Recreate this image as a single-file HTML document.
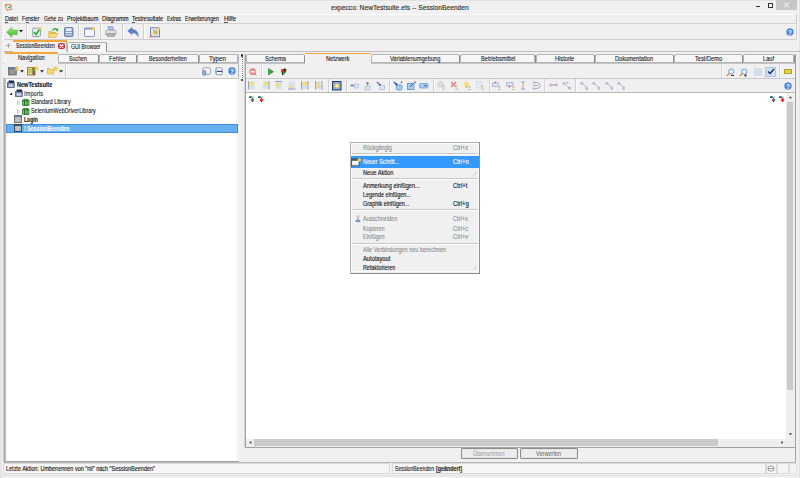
<!DOCTYPE html>
<html><head><meta charset="utf-8"><style>
html,body{margin:0;padding:0;width:800px;height:478px;overflow:hidden;background:#f0f0f0;}
body{position:relative;font-family:"Liberation Sans",sans-serif;}
div,span,svg{position:absolute;}
span{white-space:nowrap;transform-origin:0 0;-webkit-text-stroke:0.12px currentColor;}
</style></head><body>
<div style="left:0px;top:0px;width:800px;height:478px;background:#f0f0f0;"></div>
<div style="left:0px;top:0px;width:1px;height:478px;background:#e4e4e4;"></div>
<div style="left:1px;top:0px;width:1px;height:478px;background:#e8e8e8;"></div>
<div style="left:799px;top:0px;width:1px;height:478px;background:#e4e4e4;"></div>
<div style="left:0px;top:475px;width:800px;height:1px;background:#e2e2e2;"></div>
<div style="left:0px;top:0px;width:800px;height:1px;background:#e2e2e2;"></div>
<span style="left:331px;top:3.78px;font-size:7.2px;line-height:7.2px;color:#2a2a2a;transform:scaleX(0.9294);">expecco: NewTestsuite.ets -- SessionBeenden</span>
<svg style="left:4px;top:3px" width="9" height="8"><path d="M1 2.5 L6 1 L8 6 L3 7.5 Z" fill="#dde6f0" stroke="#d09050" stroke-width="1"/><path d="M1.5 1.8 L3 1.2" stroke="#d04040" stroke-width="1"/><path d="M4 4 L5 5 L7.5 2" stroke="#33aa33" stroke-width="1" fill="none"/></svg>
<div style="left:755.8px;top:5.6px;width:4.0px;height:1.0px;background:#333;"></div>
<div style="left:767.5px;top:3px;width:5.2999999999999545px;height:4.6px;box-sizing:border-box;border:0.8px solid #333;border-top-width:1.6px;"></div>
<div style="left:776px;top:0px;width:21px;height:10px;background:#c7c7c7;"></div>
<svg style="left:783px;top:2px" width="7" height="6"><path d="M1 0.5 L6 5.5 M6 0.5 L1 5.5" stroke="#fff" stroke-width="1" fill="none"/></svg>
<div style="left:4px;top:14px;width:792px;height:1px;background:#fafafa;"></div>
<div style="left:4px;top:23px;width:792px;height:1px;background:#d4d4d4;"></div>
<span style="left:4.5px;top:16.28px;font-size:6.6px;line-height:6.6px;color:#111;transform:scaleX(0.8372);">Datei</span>
<span style="left:21.6px;top:16.28px;font-size:6.6px;line-height:6.6px;color:#111;transform:scaleX(0.7776);">Fenster</span>
<span style="left:43.5px;top:16.28px;font-size:6.6px;line-height:6.6px;color:#111;transform:scaleX(0.7615);">Gehe zu</span>
<span style="left:66.7px;top:16.28px;font-size:6.6px;line-height:6.6px;color:#111;transform:scaleX(0.8448);">Projektbaum</span>
<span style="left:102px;top:16.28px;font-size:6.6px;line-height:6.6px;color:#111;transform:scaleX(0.8706);">Diagramm</span>
<span style="left:132px;top:16.28px;font-size:6.6px;line-height:6.6px;color:#111;transform:scaleX(0.8285);">Testresultate</span>
<span style="left:167px;top:16.28px;font-size:6.6px;line-height:6.6px;color:#111;transform:scaleX(0.7485);">Extras</span>
<span style="left:185px;top:16.28px;font-size:6.6px;line-height:6.6px;color:#111;transform:scaleX(0.7989);">Erweiterungen</span>
<span style="left:223.7px;top:16.28px;font-size:6.6px;line-height:6.6px;color:#111;transform:scaleX(0.9088);">Hilfe</span>
<div style="left:4.8px;top:22px;width:3.2px;height:0.6999999999999993px;background:#555;"></div>
<div style="left:26px;top:22px;width:3px;height:0.6999999999999993px;background:#555;"></div>
<div style="left:132.3px;top:22px;width:3.1999999999999886px;height:0.6999999999999993px;background:#555;"></div>
<div style="left:224px;top:22px;width:3.5px;height:0.6999999999999993px;background:#555;"></div>
<div style="left:4px;top:39px;width:792px;height:1px;background:#cdcdcd;"></div>
<div style="left:26px;top:24px;width:1px;height:15px;background:#d0d0d0;"></div>
<div style="left:27px;top:24px;width:1px;height:15px;background:#fafafa;"></div>
<div style="left:78px;top:24px;width:1px;height:15px;background:#d0d0d0;"></div>
<div style="left:79px;top:24px;width:1px;height:15px;background:#fafafa;"></div>
<div style="left:100px;top:24px;width:1px;height:15px;background:#d0d0d0;"></div>
<div style="left:101px;top:24px;width:1px;height:15px;background:#fafafa;"></div>
<div style="left:122px;top:24px;width:1px;height:15px;background:#d0d0d0;"></div>
<div style="left:123px;top:24px;width:1px;height:15px;background:#fafafa;"></div>
<div style="left:143px;top:24px;width:1px;height:15px;background:#d0d0d0;"></div>
<div style="left:144px;top:24px;width:1px;height:15px;background:#fafafa;"></div>
<div style="left:796px;top:14px;width:1px;height:26px;background:#d0d0d0;"></div>
<div style="left:3px;top:14px;width:1px;height:26px;background:#fafafa;"></div>
<svg style="left:6px;top:26.5px" width="12" height="11"><defs><linearGradient id="ga" x1="0" y1="0" x2="0" y2="1"><stop offset="0" stop-color="#9aee7a"/><stop offset="1" stop-color="#3cb82c"/></linearGradient></defs><path d="M0.5 5.2 L5.8 0.3 L5.8 3 L11.2 3 L11.2 7.6 L5.8 7.6 L5.8 10.3 Z" fill="url(#ga)" stroke="#48a838" stroke-width="0.5"/></svg>
<svg style="left:19px;top:30px" width="4" height="3"><path d="M0 0 L4 0 L2 2.5 Z" fill="#222"/></svg>
<svg style="left:32px;top:27px" width="10" height="10"><rect x="0.6" y="1.2" width="8" height="8.3" rx="1" fill="#e4ecf4" stroke="#8a98a8" stroke-width="0.9"/><path d="M2 5 L4 7.5 L7.8 2" stroke="#22b422" stroke-width="1.6" fill="none"/><circle cx="8.3" cy="1.6" r="1.5" fill="#f6d040"/></svg>
<svg style="left:48px;top:26.5px" width="11" height="11"><path d="M0.5 4 L3.5 4 L4.5 5 L8 5 L8 10.3 L0.5 10.3 Z" fill="#e8c040"/><path d="M1.5 6.5 L10 6.5 L8 10.3 L0.5 10.3 Z" fill="#f8e080" stroke="#d0a030" stroke-width="0.5"/><path d="M4.5 3.5 Q6.5 0.5 9.5 2.5" stroke="#48b048" stroke-width="1.6" fill="none"/><path d="M10.5 1.5 L9.8 4.8 L7.5 3 Z" fill="#48b048"/></svg>
<svg style="left:64px;top:27px" width="10" height="10"><rect x="0.5" y="0.5" width="8.5" height="9" rx="1.2" fill="#8da0cc" stroke="#5a6ca0" stroke-width="0.8"/><rect x="2" y="1.2" width="5.5" height="2.8" fill="#e8eef8"/><rect x="1.5" y="5" width="6.5" height="0.9" fill="#e8eef8"/><rect x="1.5" y="7" width="6.5" height="1.5" fill="#b8c6e4"/></svg>
<svg style="left:84px;top:27px" width="12" height="10"><rect x="0.5" y="1" width="10" height="8.5" rx="0.8" fill="#f4f6fa" stroke="#7a8cb8" stroke-width="0.9"/><rect x="0.5" y="1" width="10" height="1.6" fill="#8a9cc8"/><circle cx="9.8" cy="1.8" r="1.6" fill="#f8d040"/></svg>
<svg style="left:105px;top:26px" width="12" height="11"><path d="M2.5 0.5 L7.5 0.5 L9 4 L4 4 Z" fill="#a8c0e8" stroke="#7a8ab8" stroke-width="0.5"/><path d="M0.5 6 Q0.5 4 2.5 4 L9 4 Q11 4 11 6 L11 8.5 L0.5 8.5 Z" fill="#d8d8d8" stroke="#909090" stroke-width="0.6"/><rect x="2" y="7.5" width="7.5" height="3" fill="#b0b0b0" stroke="#888" stroke-width="0.5"/><path d="M1 6 H10" stroke="#f4f4f4" stroke-width="0.7"/></svg>
<svg style="left:127px;top:27px" width="12" height="10"><path d="M0.8 4 L5 0.5 L5 2.6 Q11.2 2.6 11.2 9.5 Q9.5 5.6 5 5.6 L5 7.6 Z" fill="#5a84cc" stroke="#3a5aa8" stroke-width="0.5"/></svg>
<svg style="left:148.5px;top:26.5px" width="12" height="11"><rect x="1.5" y="0.8" width="9" height="9" fill="#dfe8f5" stroke="#6a7aa8" stroke-width="0.9"/><circle cx="6.5" cy="5" r="2.6" fill="#f0c838"/><path d="M4 3 L8.5 7" stroke="#6aa0e0" stroke-width="0.8"/><path d="M0.3 10.5 L3 8.2" stroke="#f08a30" stroke-width="1.3"/><circle cx="10" cy="1.2" r="1.1" fill="#f8d040"/></svg>
<svg style="left:786px;top:27.5px" width="8" height="8"><circle cx="4" cy="4" r="3.7" fill="#4a86e0"/><text x="4" y="6.6" font-size="6.5" font-weight="bold" fill="#fff" text-anchor="middle" font-family="Liberation Sans">?</text></svg>
<div style="left:4px;top:51px;width:796px;height:1px;background:#bdbdbd;"></div>
<svg style="left:5.5px;top:43px" width="5" height="5"><path d="M2.5 0.3 L2.5 4.7 M0.3 2.5 L4.7 2.5" stroke="#a8a8a8" stroke-width="1.1"/></svg>
<div style="left:13px;top:40px;width:54px;height:12px;background:#f0f0f0;"></div>
<div style="left:13px;top:40px;width:54px;height:2px;background:#f5a53a;"></div>
<div style="left:13px;top:42px;width:1px;height:9px;background:#fafafa;"></div>
<div style="left:66px;top:42px;width:1px;height:9px;background:#b8b8b8;"></div>
<span style="left:16.3px;top:42.68px;font-size:6.6px;line-height:6.6px;color:#222;transform:scaleX(0.7814);">SessionBeenden</span>
<div style="left:58px;top:42.8px;width:7.200000000000003px;height:6.200000000000003px;background:#e24848;box-sizing:border-box;border:0.8px solid #c03434;border-radius:1.5px;"></div>
<svg style="left:59px;top:44px" width="5" height="4"><path d="M0.8 0.5 L4.2 3.5 M4.2 0.5 L0.8 3.5" stroke="#fff" stroke-width="1.1"/></svg>
<div style="left:67px;top:42px;width:40px;height:10px;background:#f7f7f7;box-sizing:border-box;border:1px solid #b0b0b0;border-bottom:none;border-radius:2px 2px 0 0;"></div>
<div style="left:106px;top:43px;width:1px;height:8px;background:#8e8e8e;"></div>
<span style="left:71.2px;top:43.78px;font-size:6.6px;line-height:6.6px;color:#222;transform:scaleX(0.7836);">GUI Browser</span>
<div style="left:4px;top:63px;width:235px;height:1px;background:#c4c4c4;"></div>
<div style="left:4.5px;top:52.5px;width:53.5px;height:11.5px;background:#f0f0f0;"></div>
<div style="left:4.5px;top:52.0px;width:53.5px;height:1.7999999999999972px;background:#f5a53a;"></div>
<div style="left:4.5px;top:53.5px;width:1.0px;height:9.5px;background:#fafafa;"></div>
<div style="left:58px;top:53.5px;width:40.5px;height:9.5px;background:#f6f6f6;box-sizing:border-box;border:1px solid #b4b4b4;border-radius:2px 2px 0 0;"></div>
<div style="left:97.5px;top:54.5px;width:1.0px;height:8.5px;background:#8c8c8c;"></div>
<div style="left:98.5px;top:53.5px;width:38.099999999999994px;height:9.5px;background:#f6f6f6;box-sizing:border-box;border:1px solid #b4b4b4;border-radius:2px 2px 0 0;"></div>
<div style="left:135.6px;top:54.5px;width:1.0px;height:8.5px;background:#8c8c8c;"></div>
<div style="left:136.6px;top:53.5px;width:62.0px;height:9.5px;background:#f6f6f6;box-sizing:border-box;border:1px solid #b4b4b4;border-radius:2px 2px 0 0;"></div>
<div style="left:197.6px;top:54.5px;width:1.0px;height:8.5px;background:#8c8c8c;"></div>
<div style="left:198.6px;top:53.5px;width:39.900000000000006px;height:9.5px;background:#f6f6f6;box-sizing:border-box;border:1px solid #b4b4b4;border-radius:2px 2px 0 0;"></div>
<div style="left:237.5px;top:54.5px;width:1.0px;height:8.5px;background:#8c8c8c;"></div>
<span style="left:17.9px;top:55.08px;font-size:6.6px;line-height:6.6px;color:#222;transform:scaleX(0.8561);">Navigation</span>
<span style="left:68.75px;top:55.78px;font-size:6.6px;line-height:6.6px;color:#222;transform:scaleX(0.8041);">Suchen</span>
<span style="left:108.5px;top:55.78px;font-size:6.6px;line-height:6.6px;color:#222;transform:scaleX(0.9087);">Fehler</span>
<span style="left:148.8px;top:55.78px;font-size:6.6px;line-height:6.6px;color:#222;transform:scaleX(0.8154);">Besonderheiten</span>
<span style="left:209px;top:55.78px;font-size:6.6px;line-height:6.6px;color:#222;transform:scaleX(0.9455);">Typen</span>
<div style="left:4px;top:78px;width:235px;height:1px;background:#c8c8c8;"></div>
<div style="left:65px;top:64px;width:1px;height:14px;background:#d0d0d0;"></div>
<div style="left:66px;top:64px;width:1px;height:14px;background:#fafafa;"></div>
<div style="left:238px;top:54px;width:1px;height:24px;background:#b8b8b8;"></div>
<svg style="left:8px;top:66px" width="12" height="10"><rect x="0.3" y="1.5" width="8" height="7.5" fill="#8a8a8a" stroke="#5a5a5a" stroke-width="0.6"/><rect x="0.3" y="1.5" width="8" height="1.5" fill="#5a78b0"/><path d="M2 4.5 L6.5 7.5 M6.5 4.5 L2 7.5" stroke="#b0b0b0" stroke-width="0.8"/><path d="M8.80 0.20 L9.43 1.73 L11.08 1.86 L9.83 2.93 L10.21 4.54 L8.80 3.68 L7.39 4.54 L7.77 2.93 L6.52 1.86 L8.17 1.73 Z" fill="#f8d848" stroke="#e0a820" stroke-width="0.4"/></svg>
<svg style="left:19.8px;top:70px" width="4" height="3"><path d="M0 0.2 L4 0.2 L2 2.6 Z" fill="#222"/></svg>
<svg style="left:27px;top:66px" width="12" height="10"><rect x="0.5" y="1.5" width="7.5" height="7.5" fill="#e8e070" stroke="#6a6a40" stroke-width="0.7"/><path d="M1 3.8 H5.5 M1 6 H5.5" stroke="#7a7a40" stroke-width="0.6"/><rect x="5.5" y="2" width="2.5" height="6.8" fill="#604030"/><circle cx="6.8" cy="4" r="0.9" fill="#40c040"/><circle cx="6.8" cy="5.8" r="0.9" fill="#40c040"/><circle cx="6.8" cy="7.6" r="0.9" fill="#e05030"/><path d="M9.00 0.20 L9.63 1.73 L11.28 1.86 L10.03 2.93 L10.41 4.54 L9.00 3.68 L7.59 4.54 L7.97 2.93 L6.72 1.86 L8.37 1.73 Z" fill="#f8d848" stroke="#e0a820" stroke-width="0.4"/></svg>
<svg style="left:39.5px;top:70px" width="4" height="3"><path d="M0 0.2 L4 0.2 L2 2.6 Z" fill="#222"/></svg>
<svg style="left:46.5px;top:66px" width="12" height="10"><path d="M0.5 2.5 L3 2.5 L4 3.5 L7 3.5 L7 8 L0.5 8 Z" fill="#f6d868" stroke="#d0a840" stroke-width="0.6"/><path d="M8.60 0.20 L9.23 1.73 L10.88 1.86 L9.63 2.93 L10.01 4.54 L8.60 3.68 L7.19 4.54 L7.57 2.93 L6.32 1.86 L7.97 1.73 Z" fill="#f8d848" stroke="#e0a820" stroke-width="0.4"/></svg>
<svg style="left:59px;top:70px" width="4" height="3"><path d="M0 0.2 L4 0.2 L2 2.6 Z" fill="#222"/></svg>
<svg style="left:202px;top:66.5px" width="9" height="9"><rect x="1" y="0.8" width="7.3" height="6.5" rx="1.2" fill="#fbfbfb" stroke="#8a90b0" stroke-width="0.9"/><rect x="0.6" y="3.6" width="3.4" height="4.6" rx="1" fill="#88b0e0" stroke="#6a80b0" stroke-width="0.6"/></svg>
<svg style="left:215px;top:66.5px" width="8" height="9"><rect x="0.8" y="0.8" width="6.4" height="7" rx="1.2" fill="#fbfbfb" stroke="#8a90b0" stroke-width="0.9"/><rect x="0.8" y="3.8" width="6.4" height="1.2" fill="#3a4880"/><rect x="0.8" y="1.5" width="1.2" height="5.5" fill="#8ac0ec"/></svg>
<svg style="left:228px;top:67px" width="8" height="8"><circle cx="4" cy="4" r="3.7" fill="#4a86e0"/><text x="4" y="6.6" font-size="6.5" font-weight="bold" fill="#fff" text-anchor="middle" font-family="Liberation Sans">?</text></svg>
<div style="left:5px;top:79px;width:233px;height:382px;background:#ffffff;"></div>
<div style="left:236px;top:79px;width:2px;height:382px;background:#f6f6f6;"></div>
<div style="left:3px;top:78px;width:1px;height:384px;background:#c4c4c4;"></div>
<div style="left:4px;top:78px;width:1px;height:384px;background:#adadad;"></div>
<div style="left:5px;top:78px;width:1px;height:384px;background:#c4c4c4;"></div>
<div style="left:6px;top:79px;width:1px;height:382px;background:#f0f0f0;"></div>
<div style="left:4px;top:461px;width:235px;height:1px;background:#a8a8a8;"></div>
<div style="left:241px;top:54px;width:2px;height:27px;background:#f8f8f8;"></div>
<div style="left:241.5px;top:57px;width:1.0px;height:1px;background:#7a7a7a;"></div>
<div style="left:241.5px;top:59px;width:1.0px;height:1px;background:#7a7a7a;"></div>
<div style="left:241.5px;top:61px;width:1.0px;height:1px;background:#7a7a7a;"></div>
<div style="left:241.5px;top:63px;width:1.0px;height:1px;background:#7a7a7a;"></div>
<div style="left:241.5px;top:65px;width:1.0px;height:1px;background:#7a7a7a;"></div>
<div style="left:241.5px;top:67px;width:1.0px;height:1px;background:#7a7a7a;"></div>
<div style="left:241.5px;top:69px;width:1.0px;height:1px;background:#7a7a7a;"></div>
<div style="left:241.5px;top:71px;width:1.0px;height:1px;background:#7a7a7a;"></div>
<div style="left:241.5px;top:73px;width:1.0px;height:1px;background:#7a7a7a;"></div>
<div style="left:241.5px;top:75px;width:1.0px;height:1px;background:#7a7a7a;"></div>
<div style="left:241.5px;top:77px;width:1.0px;height:1px;background:#7a7a7a;"></div>
<div style="left:241px;top:54px;width:1.8000000000000114px;height:2.5px;background:#222;border-radius:1px;"></div>
<div style="left:241px;top:78.5px;width:1.8000000000000114px;height:2.5px;background:#222;border-radius:1px;"></div>
<div style="left:245px;top:63px;width:550px;height:1px;background:#c4c4c4;"></div>
<div style="left:246.3px;top:54px;width:58.69999999999999px;height:9px;background:#f6f6f6;box-sizing:border-box;border:1px solid #b4b4b4;border-radius:2px 2px 0 0;"></div>
<div style="left:304px;top:55px;width:1px;height:8px;background:#8c8c8c;"></div>
<div style="left:305px;top:53px;width:65.60000000000002px;height:11px;background:#f0f0f0;"></div>
<div style="left:305px;top:52.5px;width:65.60000000000002px;height:1.7999999999999972px;background:#f5a53a;"></div>
<div style="left:305px;top:54px;width:1px;height:9px;background:#fafafa;"></div>
<div style="left:370.6px;top:54px;width:89.69999999999999px;height:9px;background:#f6f6f6;box-sizing:border-box;border:1px solid #b4b4b4;border-radius:2px 2px 0 0;"></div>
<div style="left:459.3px;top:55px;width:1.0px;height:8px;background:#8c8c8c;"></div>
<div style="left:460.3px;top:54px;width:75.19999999999999px;height:9px;background:#f6f6f6;box-sizing:border-box;border:1px solid #b4b4b4;border-radius:2px 2px 0 0;"></div>
<div style="left:534.5px;top:55px;width:1.0px;height:8px;background:#8c8c8c;"></div>
<div style="left:535.5px;top:54px;width:59.0px;height:9px;background:#f6f6f6;box-sizing:border-box;border:1px solid #b4b4b4;border-radius:2px 2px 0 0;"></div>
<div style="left:593.5px;top:55px;width:1.0px;height:8px;background:#8c8c8c;"></div>
<div style="left:594.5px;top:54px;width:79.70000000000005px;height:9px;background:#f6f6f6;box-sizing:border-box;border:1px solid #b4b4b4;border-radius:2px 2px 0 0;"></div>
<div style="left:673.2px;top:55px;width:1.0px;height:8px;background:#8c8c8c;"></div>
<div style="left:674.2px;top:54px;width:68.5px;height:9px;background:#f6f6f6;box-sizing:border-box;border:1px solid #b4b4b4;border-radius:2px 2px 0 0;"></div>
<div style="left:741.7px;top:55px;width:1.0px;height:8px;background:#8c8c8c;"></div>
<div style="left:742.7px;top:54px;width:51.799999999999955px;height:9px;background:#f6f6f6;box-sizing:border-box;border:1px solid #b4b4b4;border-radius:2px 2px 0 0;"></div>
<div style="left:793.5px;top:55px;width:1.0px;height:8px;background:#8c8c8c;"></div>
<span style="left:265.2385309375px;top:55.98px;font-size:6.6px;line-height:6.6px;color:#222;transform:scaleX(0.8600);">Schema</span>
<span style="left:325.97241328125px;top:55.98px;font-size:6.6px;line-height:6.6px;color:#222;transform:scaleX(0.8600);">Netzwerk</span>
<span style="left:390.25609843750004px;top:55.98px;font-size:6.6px;line-height:6.6px;color:#222;transform:scaleX(0.8600);">Variablenumgebung</span>
<span style="left:480.70792812499997px;top:55.98px;font-size:6.6px;line-height:6.6px;color:#222;transform:scaleX(0.8600);">Betriebsmittel</span>
<span style="left:555.37984515625px;top:55.98px;font-size:6.6px;line-height:6.6px;color:#222;transform:scaleX(0.8600);">Historie</span>
<span style="left:615.2609025px;top:55.98px;font-size:6.6px;line-height:6.6px;color:#222;transform:scaleX(0.8600);">Dokumentation</span>
<span style="left:694.88613375px;top:55.98px;font-size:6.6px;line-height:6.6px;color:#222;transform:scaleX(0.8600);">Test/Demo</span>
<span style="left:763.07632078125px;top:55.98px;font-size:6.6px;line-height:6.6px;color:#222;transform:scaleX(0.8600);">Lauf</span>
<div style="left:795px;top:54px;width:1.2999999999999545px;height:408px;background:#a0a0a0;"></div>
<div style="left:245px;top:78px;width:550px;height:1px;background:#c8c8c8;"></div>
<div style="left:245px;top:92px;width:550px;height:1px;background:#b8b8b8;"></div>
<div style="left:260.5px;top:64px;width:1.0px;height:14px;background:#d8d8d8;"></div>
<div style="left:261.5px;top:64px;width:1.0px;height:14px;background:#fafafa;"></div>
<div style="left:721px;top:64px;width:1px;height:14px;background:#d8d8d8;"></div>
<div style="left:722px;top:64px;width:1px;height:14px;background:#fafafa;"></div>
<div style="left:778.5px;top:64px;width:1.0px;height:14px;background:#d8d8d8;"></div>
<div style="left:779.5px;top:64px;width:1.0px;height:14px;background:#fafafa;"></div>
<div style="left:327.5px;top:79px;width:1.0px;height:13px;background:#d0d0d0;"></div>
<div style="left:328.5px;top:79px;width:1.0px;height:13px;background:#fafafa;"></div>
<div style="left:345.5px;top:79px;width:1.0px;height:13px;background:#d0d0d0;"></div>
<div style="left:346.5px;top:79px;width:1.0px;height:13px;background:#fafafa;"></div>
<div style="left:388.75px;top:79px;width:1.0px;height:13px;background:#d0d0d0;"></div>
<div style="left:389.75px;top:79px;width:1.0px;height:13px;background:#fafafa;"></div>
<div style="left:432.5px;top:79px;width:1.0px;height:13px;background:#d0d0d0;"></div>
<div style="left:433.5px;top:79px;width:1.0px;height:13px;background:#fafafa;"></div>
<div style="left:488.75px;top:79px;width:1.0px;height:13px;background:#d0d0d0;"></div>
<div style="left:489.75px;top:79px;width:1.0px;height:13px;background:#fafafa;"></div>
<div style="left:544.4px;top:79px;width:1.0px;height:13px;background:#d0d0d0;"></div>
<div style="left:545.4px;top:79px;width:1.0px;height:13px;background:#fafafa;"></div>
<div style="left:574.7px;top:79px;width:1.0px;height:13px;background:#d0d0d0;"></div>
<div style="left:575.7px;top:79px;width:1.0px;height:13px;background:#fafafa;"></div>
<div style="left:246px;top:93px;width:549px;height:354px;background:#ffffff;"></div>
<div style="left:244px;top:54px;width:1px;height:393px;background:#d0d0d0;"></div>
<div style="left:245px;top:54px;width:1px;height:393px;background:#a4a4a4;"></div>
<div style="left:786px;top:93px;width:9px;height:346px;background:#eeeeee;"></div>
<div style="left:786px;top:93px;width:9px;height:8px;background:#f0f0f0;"></div>
<div style="left:786.9px;top:101.9px;width:6.300000000000068px;height:288.6px;background:#cacaca;"></div>
<div style="left:246px;top:439px;width:549px;height:7.5px;background:#eeeeee;"></div>
<div style="left:254px;top:439.3px;width:464px;height:6.300000000000011px;background:#cacaca;"></div>
<div style="left:245px;top:446.5px;width:551px;height:1.0px;background:#a0a0a0;"></div>
<div style="left:460.7px;top:448.3px;width:57.400000000000034px;height:10.300000000000011px;background:#ededed;box-sizing:border-box;border:1px solid #8e8e8e;border-radius:1px;box-shadow:inset 0 0 0 0.6px #dcdcdc;"></div>
<span style="left:473.4px;top:450.78px;font-size:6.6px;line-height:6.6px;color:#a8a8a8;transform:scaleX(0.8281);">Übernehmen</span>
<div style="left:520px;top:448.3px;width:57.799999999999955px;height:10.300000000000011px;background:#ededed;box-sizing:border-box;border:1px solid #8e8e8e;border-radius:1px;box-shadow:inset 0 0 0 0.6px #dcdcdc;"></div>
<span style="left:536.3px;top:450.78px;font-size:6.6px;line-height:6.6px;color:#7a7a7a;transform:scaleX(0.8480);">Verwerfen</span>
<div style="left:4px;top:462px;width:791.5px;height:1px;background:#b8b8b8;"></div>
<div style="left:3px;top:463px;width:387px;height:11px;background:#f5f5f5;box-sizing:border-box;border:1px solid #dadada;"></div>
<div style="left:392px;top:463px;width:374px;height:11px;background:#f5f5f5;box-sizing:border-box;border:1px solid #dadada;"></div>
<div style="left:766px;top:463px;width:11px;height:11px;background:#f5f5f5;box-sizing:border-box;border:1px solid #dadada;"></div>
<div style="left:777px;top:463px;width:12px;height:11px;background:#f5f5f5;box-sizing:border-box;border:1px solid #dadada;"></div>
<div style="left:789px;top:463px;width:8px;height:11px;background:#f3f3f3;box-sizing:border-box;border:1px solid #e2e2e2;"></div>
<span style="left:6px;top:465.62px;font-size:6.5px;line-height:6.5px;color:#111;transform:scaleX(0.8440);">Letzte Aktion: Umbenennen von "nil" nach "SessionBeenden"</span>
<span style="left:394.5px;top:465.62px;font-size:6.5px;line-height:6.5px;color:#222;transform:scaleX(0.7935);">SessionBeenden</span>
<span style="left:436px;top:465.62px;font-size:6.5px;line-height:6.5px;color:#222;transform:scaleX(0.8181);font-weight:bold;">[geändert]</span>
<svg style="left:7px;top:80.3px" width="8" height="8"><path d="M1.5 0.5 L7 0.5 L7.5 3 L2 3 Z" fill="#1e2a44"/><path d="M0.3 2.5 L1.5 1.2 L2 3 Z" fill="#3a4a6a"/><rect x="0.5" y="2.8" width="6.8" height="4.8" fill="#8a9ac0" stroke="#2a3a5a" stroke-width="0.6"/><rect x="2" y="4.5" width="3.8" height="2" fill="#d8e0f0"/></svg>
<span style="left:16.5px;top:81.98px;font-size:6.6px;line-height:6.6px;color:#111;transform:scaleX(0.8393);font-weight:bold;">NewTestsuite</span>
<svg style="left:8.8px;top:91.5px" width="4" height="4"><path d="M3.2 0.3 L3.2 3 L0.3 3 Z" fill="#222"/></svg>
<svg style="left:14.5px;top:88.8px" width="8" height="8"><path d="M1.5 0.5 L7 0.5 L7.5 3 L2 3 Z" fill="#1e2a44"/><path d="M0.3 2.5 L1.5 1.2 L2 3 Z" fill="#3a4a6a"/><rect x="0.5" y="2.8" width="6.8" height="4.8" fill="#8a9ac0" stroke="#2a3a5a" stroke-width="0.6"/><rect x="2" y="4.5" width="3.8" height="2" fill="#d8e0f0"/></svg>
<span style="left:23.5px;top:90.58px;font-size:6.6px;line-height:6.6px;color:#333;transform:scaleX(0.8725);">Imports</span>
<svg style="left:17px;top:100.1px" width="4" height="5"><path d="M0.5 0.5 L3 2.5 L0.5 4.5 Z" fill="none" stroke="#aaa" stroke-width="0.6"/></svg>
<svg style="left:21.5px;top:98.0px" width="8" height="8"><rect x="0.5" y="1.8" width="6.5" height="5.8" rx="0.8" fill="#38c838" stroke="#1a4a1a" stroke-width="0.7"/><path d="M2.5 1.8 V7.6 M5 1.8 V7.6" stroke="#1a4a1a" stroke-width="0.7"/><path d="M1.5 2 Q2.5 0 3.8 1.8 Q5 0 6 2" stroke="#1a4a1a" stroke-width="0.6" fill="#90e890"/><path d="M1.3 4 V6.5 M3.8 4 V6.5 M6 4 V6.5" stroke="#a8f8a0" stroke-width="0.6"/></svg>
<span style="left:31px;top:99.38px;font-size:6.6px;line-height:6.6px;color:#222;transform:scaleX(0.8115);">Standard Library</span>
<svg style="left:17px;top:108.8px" width="4" height="5"><path d="M0.5 0.5 L3 2.5 L0.5 4.5 Z" fill="none" stroke="#aaa" stroke-width="0.6"/></svg>
<svg style="left:21.5px;top:106.7px" width="8" height="8"><rect x="0.5" y="1.8" width="6.5" height="5.8" rx="0.8" fill="#38c838" stroke="#1a4a1a" stroke-width="0.7"/><path d="M2.5 1.8 V7.6 M5 1.8 V7.6" stroke="#1a4a1a" stroke-width="0.7"/><path d="M1.5 2 Q2.5 0 3.8 1.8 Q5 0 6 2" stroke="#1a4a1a" stroke-width="0.6" fill="#90e890"/><path d="M1.3 4 V6.5 M3.8 4 V6.5 M6 4 V6.5" stroke="#a8f8a0" stroke-width="0.6"/></svg>
<span style="left:31px;top:108.08px;font-size:6.6px;line-height:6.6px;color:#222;transform:scaleX(0.8229);">SeleniumWebDriverLibrary</span>
<svg style="left:14px;top:115.3px" width="8" height="8"><rect x="0.4" y="0.4" width="7.2" height="7.2" fill="#a8a8a8" stroke="#6a6a6a" stroke-width="0.8"/><rect x="0.4" y="0.4" width="7.2" height="1.3" fill="#4a6aa8"/><path d="M1.5 3 L3 4.5 L1.5 6 M6.5 3 L5 4.5 L6.5 6 M3 3 H5 M3 6 H5" stroke="#eeeeee" stroke-width="0.8" fill="none"/></svg>
<span style="left:23.9px;top:116.78px;font-size:6.6px;line-height:6.6px;color:#111;transform:scaleX(0.7684);font-weight:bold;">Login</span>
<div style="left:6px;top:124px;width:231.5px;height:8.5px;background:#66b0f2;box-sizing:border-box;border:1px solid #3c8ee0;"></div>
<svg style="left:14px;top:124.2px" width="8" height="8"><rect x="0.4" y="0.4" width="7.2" height="7.2" fill="#a8a8a8" stroke="#303848" stroke-width="0.8"/><rect x="0.4" y="0.4" width="7.2" height="1.3" fill="#303848"/><path d="M1.5 3 L3 4.5 L1.5 6 M6.5 3 L5 4.5 L6.5 6 M3 3 H5 M3 6 H5" stroke="#eeeeee" stroke-width="0.8" fill="none"/></svg>
<span style="left:23.5px;top:125.78px;font-size:6.6px;line-height:6.6px;color:#ffffff;transform:scaleX(0.7952);font-weight:bold;">! SessionBeenden</span>
<svg style="left:248.5px;top:67.5px" width="8" height="8"><circle cx="3.7" cy="3.7" r="3.2" fill="#f29090" stroke="#e07070" stroke-width="0.5"/><rect x="1.5" y="3.2" width="4.4" height="1.2" fill="#fff"/><path d="M5.5 5.5 L7.5 7.5" stroke="#80a060" stroke-width="1"/></svg>
<svg style="left:268px;top:68px" width="6" height="8"><path d="M0.5 0.5 L5.5 3.7 L0.5 7 Z" fill="#30b030" stroke="#187018" stroke-width="0.5"/></svg>
<svg style="left:279.5px;top:67.5px" width="7" height="8"><path d="M1 2 L5 0.3 L6.5 1.5 L5.5 4.5 L2.5 7.5 L1.8 5 Z" fill="#183818"/><path d="M3 4 L5.5 3.5 L4 6.5 L2.5 7.5 Z" fill="#30a030"/><circle cx="2.8" cy="2.5" r="1.5" fill="#ff2020"/></svg>
<svg style="left:726px;top:67.5px" width="9" height="9"><circle cx="5.2" cy="3.6" r="2.6" fill="#e8f4ff" stroke="#5a90d0" stroke-width="0.9"/><path d="M3.3 5.5 L0.8 8" stroke="#e08a30" stroke-width="1.3"/><rect x="5" y="7" width="3" height="1" fill="#333"/></svg>
<svg style="left:739px;top:67.5px" width="9" height="9"><circle cx="5.2" cy="3.6" r="2.6" fill="#e8f4ff" stroke="#5a90d0" stroke-width="0.9"/><path d="M3.3 5.5 L0.8 8" stroke="#e08a30" stroke-width="1.3"/><rect x="5.5" y="6.5" width="2" height="2" fill="#333"/></svg>
<div style="left:754px;top:68px;width:8px;height:8px;background:#d8dce8;"></div>
<div style="left:765px;top:66.5px;width:11px;height:10.5px;background:#cfe0f5;box-sizing:border-box;border:1px solid #a8c4e8;"></div>
<svg style="left:767px;top:68px" width="8" height="7"><path d="M1 3.5 L3 5.5 L7 1" stroke="#1a2a6a" stroke-width="1.3" fill="none"/></svg>
<div style="left:784px;top:68.5px;width:7.5px;height:5.5px;background:#e8d040;box-sizing:border-box;border:0.6px solid #b0a020;"></div>
<svg style="left:248px;top:81px;opacity:1" width="8" height="9"><rect x="0.5" y="0.5" width="6.5" height="7.5" fill="#d8e0ee"/><rect x="1" y="1" width="4.5" height="3" fill="#f8dc68"/><rect x="0" y="0" width="1" height="8.5" fill="#98a4c4"/></svg>
<svg style="left:262px;top:81px;opacity:1" width="8" height="9"><rect x="0.5" y="0.5" width="6.5" height="7.5" fill="#d8e0ee"/><rect x="2" y="1" width="4.5" height="3" fill="#f8dc68"/><rect x="6.5" y="0" width="1" height="8.5" fill="#98a4c4"/></svg>
<svg style="left:275px;top:81px;opacity:1" width="8" height="9"><rect x="0.5" y="0.5" width="6.5" height="7.5" fill="#d8e0ee"/><rect x="1" y="2.5" width="3" height="3" fill="#f8dc68"/><rect x="0" y="0" width="7.5" height="1" fill="#98a4c4"/></svg>
<svg style="left:288px;top:81px;opacity:1" width="8" height="9"><rect x="0.5" y="0.5" width="6.5" height="7.5" fill="#d8e0ee"/><rect x="1" y="4" width="3" height="3" fill="#f8dc68"/><rect x="0" y="7.5" width="7.5" height="1" fill="#98a4c4"/></svg>
<svg style="left:301px;top:81px;opacity:1" width="8" height="9"><rect x="0.5" y="0.5" width="6.5" height="7.5" fill="#d8e0ee"/><rect x="1.5" y="1" width="4.5" height="3" fill="#f8dc68"/><rect x="0" y="0" width="1" height="8.5" fill="#98a4c4"/><rect x="6.5" y="0" width="1" height="8.5" fill="#98a4c4"/></svg>
<svg style="left:314.5px;top:81px;opacity:1" width="8" height="9"><rect x="0.5" y="0.5" width="6.5" height="7.5" fill="#d8e0ee"/><rect x="2.5" y="1" width="2.5" height="6.5" fill="#f8dc68"/><rect x="0" y="0" width="1" height="8.5" fill="#98a4c4"/><rect x="6.5" y="0" width="1" height="8.5" fill="#98a4c4"/></svg>
<svg style="left:331.5px;top:80.5px;opacity:1" width="10" height="10"><rect x="0.5" y="0.5" width="8.5" height="8.5" fill="#7aa8e0" stroke="#2a3a78" stroke-width="1"/><path d="M5.00 0.90 L5.90 3.14 L8.29 2.80 L6.80 4.70 L8.29 6.60 L5.90 6.26 L5.00 8.50 L4.10 6.26 L1.71 6.60 L3.20 4.70 L1.71 2.80 L4.10 3.14 Z" fill="#f8d030"/><circle cx="5" cy="4.7" r="1.5" fill="#fff4b0"/></svg>
<svg style="left:350px;top:81px;opacity:1" width="9" height="9"><path d="M0.5 4.5 H4.5" stroke="#7a8ab0" stroke-width="1.2"/><path d="M0.3 4.5 L2.5 2.8 L2.5 6.2 Z" fill="#7a8ab0"/><rect x="4.5" y="3" width="4" height="4" fill="#dde6f4" stroke="#a8b8d4" stroke-width="0.7"/></svg>
<svg style="left:363.5px;top:80.5px;opacity:1" width="8" height="10"><path d="M3.5 0.5 L5.5 3 L1.5 3 Z" fill="#7a8ab0"/><rect x="3" y="2.5" width="1" height="2" fill="#7a8ab0"/><rect x="1" y="5" width="5" height="4" fill="#dde6f4" stroke="#a8b8d4" stroke-width="0.7"/></svg>
<svg style="left:376px;top:81px;opacity:1" width="9" height="9"><path d="M0.8 0.8 L4.5 4.5" stroke="#4a5a98" stroke-width="1.1"/><path d="M5 5 L2.5 4.8 L4.8 2.5 Z" fill="#4a5a98"/><rect x="4" y="4.5" width="4.5" height="4" fill="#dde6f4" stroke="#a8b8d4" stroke-width="0.7"/></svg>
<svg style="left:393px;top:80.5px;opacity:1" width="10" height="10"><path d="M0.8 0.8 L4 4" stroke="#2a3aa8" stroke-width="1.2"/><path d="M4.5 4.5 L2 4.2 L4.2 2 Z" fill="#2a3aa8"/><rect x="3.5" y="4" width="5.5" height="5" rx="1.2" fill="#a8ccf0" stroke="#4a90d8" stroke-width="0.8"/><circle cx="8.5" cy="1.2" r="0.8" fill="#444"/></svg>
<svg style="left:406.5px;top:80.5px;opacity:1" width="9" height="10"><rect x="0.5" y="2.5" width="6.5" height="6" fill="#a8ccf0" stroke="#4a90d8" stroke-width="0.8"/><path d="M3 6 L6 3" stroke="#2a3aa8" stroke-width="0.8"/><circle cx="8" cy="1.2" r="0.8" fill="#444"/></svg>
<svg style="left:418.5px;top:82.5px;opacity:1" width="10" height="6"><rect x="0.5" y="0.5" width="8.5" height="4.5" rx="1" fill="#a8ccf0" stroke="#5a9ad8" stroke-width="0.7"/><path d="M5 2.7 H8" stroke="#3a5a90" stroke-width="0.9"/></svg>
<svg style="left:437px;top:81px;opacity:0.75" width="9" height="10"><circle cx="3.5" cy="3.5" r="2.8" fill="#d8d8d8" stroke="#b8b8b8" stroke-width="0.6"/><circle cx="6.5" cy="5.5" r="1.1" fill="#c8b070"/><path d="M4.7 8.5 Q6.5 6.3 8.3 8.5 Z" fill="#b09a58"/></svg>
<svg style="left:449.5px;top:81px;opacity:0.75" width="9" height="10"><path d="M1 1 L6 6 M6 1 L1 6" stroke="#e05050" stroke-width="1.2"/><circle cx="6.5" cy="5.5" r="1.1" fill="#c8b070"/><path d="M4.7 8.5 Q6.5 6.3 8.3 8.5 Z" fill="#b09a58"/></svg>
<svg style="left:463px;top:80.5px;opacity:0.75" width="9" height="10"><circle cx="3.5" cy="3" r="2.5" fill="#f8d848"/><rect x="2.5" y="5" width="2" height="2" fill="#c8b050"/><circle cx="6.5" cy="6" r="1.1" fill="#c8b070"/><path d="M4.7 9 Q6.5 6.8 8.3 9 Z" fill="#b09a58"/></svg>
<svg style="left:476px;top:81px;opacity:0.75" width="9" height="10"><rect x="0.5" y="0.5" width="5" height="6.5" fill="#e0ecfa" stroke="#b8cce8" stroke-width="0.6"/><circle cx="6.5" cy="5.5" r="1.1" fill="#c8b070"/><path d="M4.7 8.5 Q6.5 6.3 8.3 8.5 Z" fill="#b09a58"/></svg>
<svg style="left:491.5px;top:80.5px;opacity:0.75" width="10" height="10"><rect x="0.5" y="2" width="6" height="3.5" fill="#d8dcf0" stroke="#8a90c8" stroke-width="0.7"/><circle cx="3.5" cy="1.3" r="0.9" fill="#e03030"/><circle cx="7.5" cy="6" r="1.1" fill="#c8b070"/><path d="M5.7 9 Q7.5 6.8 9.3 9 Z" fill="#b09a58"/></svg>
<svg style="left:505.5px;top:80.5px;opacity:0.75" width="10" height="10"><rect x="0.5" y="1.5" width="6.5" height="3.5" fill="#d8dcf0" stroke="#8a90c8" stroke-width="0.7"/><circle cx="3.5" cy="5.7" r="0.9" fill="#e03030"/><circle cx="7.5" cy="6" r="1.1" fill="#c8b070"/><path d="M5.7 9 Q7.5 6.8 9.3 9 Z" fill="#b09a58"/></svg>
<svg style="left:519.5px;top:80.5px;opacity:0.75" width="6" height="10"><path d="M3 1.5 V7.5" stroke="#e05050" stroke-width="0.8"/><path d="M1 1 H5 M1 8 H5" stroke="#6a8ab8" stroke-width="1.2"/></svg>
<svg style="left:531.5px;top:80.5px;opacity:0.75" width="10" height="10"><path d="M2 1.5 H5 Q8 1.5 8 4.5 Q8 7.5 5 7.5 H2" stroke="#8a9ab8" stroke-width="1" fill="none"/><path d="M1 4.5 H6" stroke="#e05050" stroke-width="0.8"/><rect x="0.5" y="0.5" width="3" height="2" fill="#9ab0d0"/><rect x="0.5" y="6.5" width="3" height="2" fill="#9ab0d0"/></svg>
<svg style="left:549px;top:82px;opacity:0.75" width="9" height="6"><circle cx="1.8" cy="3" r="1.6" fill="#a0a8d8"/><circle cx="7.2" cy="3" r="1.6" fill="#a0a8d8"/><path d="M3 3 H6" stroke="#e05050" stroke-width="0.9"/></svg>
<svg style="left:561.5px;top:80.5px;opacity:0.75" width="10" height="10"><circle cx="2" cy="2.5" r="1.6" fill="#a0a8d8"/><circle cx="7.5" cy="7" r="1.6" fill="#a0a8d8"/><path d="M3 3 L6.5 6" stroke="#8a90b8" stroke-width="0.7"/><circle cx="5.5" cy="1.5" r="0.8" fill="#e05050"/></svg>
<svg style="left:579.5px;top:80.5px;opacity:0.75" width="9" height="10"><circle cx="1.8" cy="2.2" r="1.5" fill="#a8b0d8"/><path d="M3 3 L6 6" stroke="#8a90b0" stroke-width="0.8"/><rect x="5.5" y="5.5" width="2.5" height="3.5" rx="1" fill="#a8b0d8"/></svg>
<svg style="left:592px;top:80.5px;opacity:0.75" width="9" height="10"><circle cx="1.8" cy="2.2" r="1.5" fill="#a8b0d8"/><path d="M3 3 L6 6" stroke="#8a90b0" stroke-width="0.8"/><rect x="5.5" y="5.5" width="2.5" height="3.5" rx="1" fill="#a8b0d8"/></svg>
<svg style="left:604.5px;top:80.5px;opacity:0.75" width="9" height="10"><circle cx="1.8" cy="2.2" r="1.5" fill="#a8b0d8"/><path d="M3 3 L6 6" stroke="#8a90b0" stroke-width="0.8"/><rect x="5.5" y="5.5" width="2.5" height="3.5" rx="1" fill="#a8b0d8"/></svg>
<svg style="left:617px;top:80.5px;opacity:0.75" width="9" height="10"><circle cx="1.8" cy="2.2" r="1.5" fill="#a8b0d8"/><path d="M3 3 L6 6" stroke="#8a90b0" stroke-width="0.8"/><rect x="5.5" y="5.5" width="2.5" height="3.5" rx="1" fill="#a8b0d8"/></svg>
<svg style="left:784px;top:81.5px" width="8" height="8"><circle cx="4" cy="4" r="3.7" fill="#4a86e0"/><text x="4" y="6.6" font-size="6.5" font-weight="bold" fill="#fff" text-anchor="middle" font-family="Liberation Sans">?</text></svg>
<svg style="left:249px;top:96px" width="6" height="7"><rect x="0" y="0.2" width="3" height="1.8" rx="0.6" fill="#135a5a"/><rect x="2.5" y="0.5" width="2.5" height="1.4" fill="#8ccccc"/><path d="M3.5 1.8 L5.5 4 L3.5 6.5 L1.5 4 Z" fill="#6a6a6a"/></svg>
<svg style="left:257.8px;top:96px" width="6" height="7"><rect x="0" y="0.2" width="3" height="1.8" rx="0.6" fill="#135a5a"/><rect x="2.5" y="0.5" width="2.5" height="1.4" fill="#8ccccc"/><path d="M3.5 1.8 L5.5 4 L3.5 6.5 L1.5 4 Z" fill="#ff2020"/></svg>
<svg style="left:770px;top:96px" width="6" height="7"><rect x="0" y="0.2" width="3" height="1.8" rx="0.6" fill="#135a5a"/><rect x="2.5" y="0.5" width="2.5" height="1.4" fill="#8ccccc"/><path d="M3.5 1.8 L5.5 4 L3.5 6.5 L1.5 4 Z" fill="#6a6a6a"/></svg>
<svg style="left:778.5px;top:96px" width="6" height="7"><rect x="0" y="0.2" width="3" height="1.8" rx="0.6" fill="#135a5a"/><rect x="2.5" y="0.5" width="2.5" height="1.4" fill="#8ccccc"/><path d="M3.5 1.8 L5.5 4 L3.5 6.5 L1.5 4 Z" fill="#ff2020"/></svg>
<svg style="left:789px;top:96px" width="3" height="3"><path d="M0 2.3 L1.5 0.3 L3 2.3 Z" fill="#333"/></svg>
<svg style="left:789px;top:433px" width="3" height="3"><path d="M0 0.3 L1.5 2.3 L3 0.3 Z" fill="#333"/></svg>
<svg style="left:249px;top:441px" width="3" height="3"><path d="M2.3 0 L0.3 1.5 L2.3 3 Z" fill="#333"/></svg>
<svg style="left:781px;top:441px" width="3" height="3"><path d="M0.3 0 L2.3 1.5 L0.3 3 Z" fill="#333"/></svg>
<svg style="left:767px;top:465px" width="8" height="7"><rect x="1" y="1" width="6" height="5" rx="2" fill="none" stroke="#888" stroke-width="0.8"/><path d="M1 3.5 H7" stroke="#888" stroke-width="0.8"/></svg>
<div style="left:350px;top:142px;width:130px;height:131.8px;background:#f0f0f0;box-sizing:border-box;border:1px solid #b0b0b0;border-right:1.5px solid #8e8e8e;border-bottom:1.5px solid #8e8e8e;"></div>
<div style="left:351px;top:143px;width:127.5px;height:1px;background:#fcfcfc;"></div>
<div style="left:351px;top:143px;width:1px;height:129px;background:#fcfcfc;"></div>
<div style="left:477.5px;top:143px;width:1.0px;height:129px;background:#fcfcfc;"></div>
<div style="left:351px;top:271.3px;width:127.5px;height:1.0px;background:#fcfcfc;"></div>
<div style="left:352px;top:153.2px;width:126px;height:1.0px;background:#c8c8c8;"></div>
<div style="left:352px;top:154.2px;width:126px;height:1.0px;background:#ffffff;"></div>
<div style="left:352px;top:178.3px;width:126px;height:1.0px;background:#c8c8c8;"></div>
<div style="left:352px;top:179.3px;width:126px;height:1.0px;background:#ffffff;"></div>
<div style="left:352px;top:209px;width:126px;height:1px;background:#c8c8c8;"></div>
<div style="left:352px;top:210px;width:126px;height:1px;background:#ffffff;"></div>
<div style="left:352px;top:243px;width:126px;height:1px;background:#c8c8c8;"></div>
<div style="left:352px;top:244px;width:126px;height:1px;background:#ffffff;"></div>
<div style="left:350.8px;top:156.1px;width:128.0px;height:11.700000000000017px;background:#3399ff;"></div>
<svg style="left:351px;top:158px" width="11" height="9"><rect x="0.6" y="1" width="7.5" height="6.8" fill="#fafafa" stroke="#404858" stroke-width="0.9"/><rect x="0.6" y="1" width="7.5" height="1.8" fill="#505868"/><path d="M1.5 6.8 H7" stroke="#c8c8c8" stroke-width="0.8"/><circle cx="8.3" cy="2" r="1.8" fill="#f8d040"/></svg>
<span style="left:362.8px;top:145.08px;font-size:6.6px;line-height:6.6px;color:#8e8e8e;transform:scaleX(0.8291);">Rückgängig</span>
<span style="left:453.4px;top:145.08px;font-size:6.6px;line-height:6.6px;color:#8e8e8e;transform:scaleX(0.8726);">Ctrl+z</span>
<span style="left:362.8px;top:159.18px;font-size:6.6px;line-height:6.6px;color:#ffffff;transform:scaleX(0.8156);">Neuer Schritt...</span>
<span style="left:453.4px;top:159.18px;font-size:6.6px;line-height:6.6px;color:#ffffff;transform:scaleX(0.8882);">Ctrl+n</span>
<span style="left:362.8px;top:169.58px;font-size:6.6px;line-height:6.6px;color:#111;transform:scaleX(0.8541);">Neue Aktion</span>
<span style="left:362.8px;top:182.88px;font-size:6.6px;line-height:6.6px;color:#111;transform:scaleX(0.8553);">Anmerkung einfügen...</span>
<span style="left:453.4px;top:182.88px;font-size:6.6px;line-height:6.6px;color:#111;transform:scaleX(0.8964);">Ctrl+t</span>
<span style="left:362.8px;top:191.58px;font-size:6.6px;line-height:6.6px;color:#111;transform:scaleX(0.8174);">Legende einfügen...</span>
<span style="left:362.8px;top:200.58px;font-size:6.6px;line-height:6.6px;color:#111;transform:scaleX(0.8338);">Graphik einfügen...</span>
<span style="left:453.4px;top:200.58px;font-size:6.6px;line-height:6.6px;color:#111;transform:scaleX(0.8882);">Ctrl+g</span>
<span style="left:362.8px;top:215.68px;font-size:6.6px;line-height:6.6px;color:#8e8e8e;transform:scaleX(0.8248);">Ausschneiden</span>
<span style="left:453.4px;top:215.68px;font-size:6.6px;line-height:6.6px;color:#8e8e8e;transform:scaleX(0.8554);">Ctrl+x</span>
<span style="left:362.8px;top:225.58px;font-size:6.6px;line-height:6.6px;color:#8e8e8e;transform:scaleX(0.8175);">Kopieren</span>
<span style="left:453.4px;top:225.58px;font-size:6.6px;line-height:6.6px;color:#8e8e8e;transform:scaleX(0.8726);">Ctrl+c</span>
<span style="left:362.8px;top:234.18px;font-size:6.6px;line-height:6.6px;color:#8e8e8e;transform:scaleX(0.8290);">Einfügen</span>
<span style="left:453.4px;top:234.18px;font-size:6.6px;line-height:6.6px;color:#8e8e8e;transform:scaleX(0.8726);">Ctrl+v</span>
<span style="left:362.8px;top:247.18px;font-size:6.6px;line-height:6.6px;color:#8e8e8e;transform:scaleX(0.8346);">Alle Verbindungen neu berechnen</span>
<span style="left:362.8px;top:255.98px;font-size:6.6px;line-height:6.6px;color:#111;transform:scaleX(0.8785);">Autolayout</span>
<span style="left:362.8px;top:264.58px;font-size:6.6px;line-height:6.6px;color:#111;transform:scaleX(0.8127);">Refaktorieren</span>
<svg style="left:473px;top:172px" width="4" height="4"><path d="M0.5 3.5 L3.5 0.5" stroke="#aaa" stroke-width="0.7"/></svg>
<svg style="left:472.5px;top:266px" width="4" height="4"><path d="M0.5 3.5 L3.5 0.5" stroke="#aaa" stroke-width="0.7"/></svg>
<svg style="left:355px;top:214.5px" width="6" height="8"><path d="M1.5 0.5 L3.5 4.5 M4.5 0.5 L2.5 4.5" stroke="#a0a0a8" stroke-width="0.7"/><path d="M0.3 6.5 Q0.5 4.2 3 4.5 Q5.5 4.2 5.7 6.5 Q3 7.8 0.3 6.5 Z" fill="#7090d0"/></svg>
</body></html>
